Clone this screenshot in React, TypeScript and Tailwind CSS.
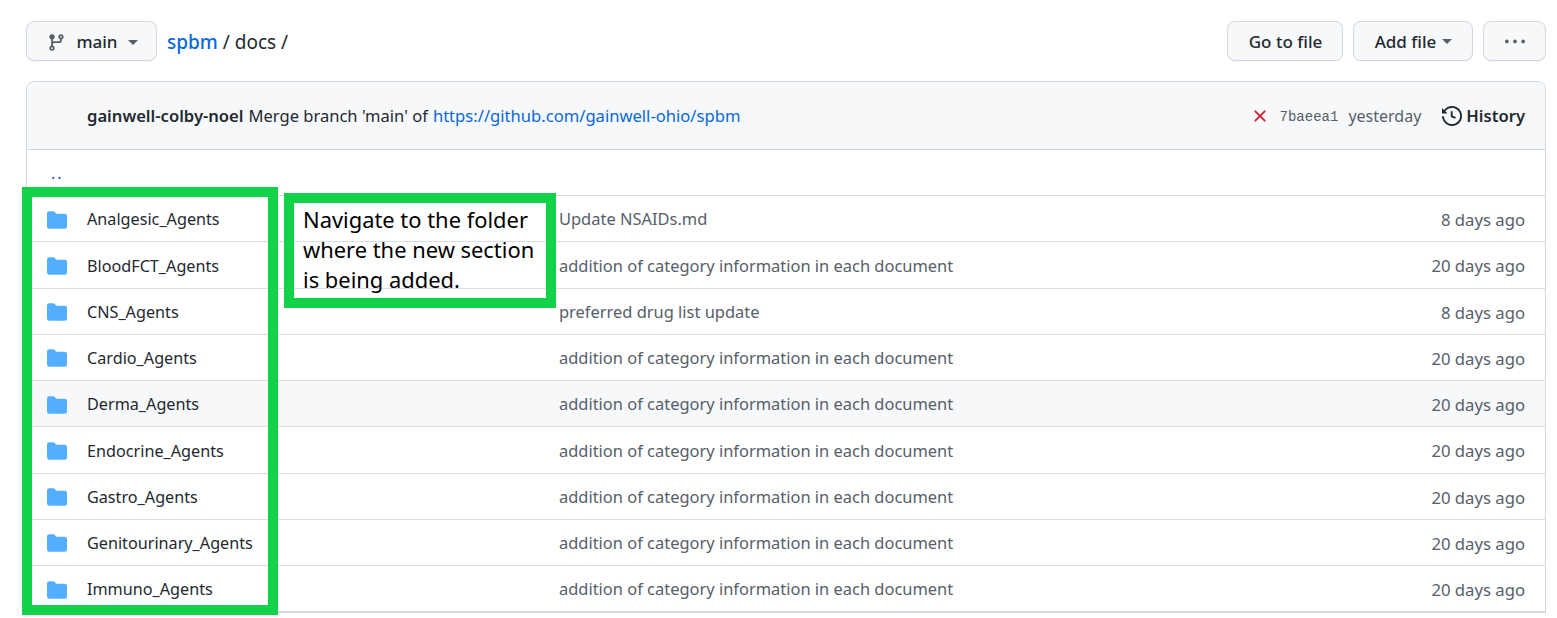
const FONT = "font-['Noto_Sans',sans-serif]";

const rows = [
  { name: "Analgesic_Agents", msg: "Update NSAIDs.md", age: "8 days ago" },
  { name: "BloodFCT_Agents", msg: "addition of category information in each document", age: "20 days ago" },
  { name: "CNS_Agents", msg: "preferred drug list update", age: "8 days ago" },
  { name: "Cardio_Agents", msg: "addition of category information in each document", age: "20 days ago" },
  { name: "Derma_Agents", msg: "addition of category information in each document", age: "20 days ago", hover: true },
  { name: "Endocrine_Agents", msg: "addition of category information in each document", age: "20 days ago" },
  { name: "Gastro_Agents", msg: "addition of category information in each document", age: "20 days ago" },
  { name: "Genitourinary_Agents", msg: "addition of category information in each document", age: "20 days ago" },
  { name: "Immuno_Agents", msg: "addition of category information in each document", age: "20 days ago" },
];

function Caret() {
  return <span className="inline-block border-x-[5px] border-t-[5px] border-x-transparent border-t-[#57606a]" />;
}

function FolderIcon() {
  return (
    <svg viewBox="0 0 16 16" className="w-5 h-5 fill-[#54aeff] shrink-0">
      <path d="M1.75 1A1.75 1.75 0 000 2.75v10.5C0 14.216.784 15 1.75 15h12.5A1.75 1.75 0 0016 13.25v-8.5A1.75 1.75 0 0014.25 3H7.5a.25.25 0 01-.2-.1l-.9-1.2C6.07 1.26 5.55 1 5 1H1.75z" />
    </svg>
  );
}

function Button({ className, children }: { className: string; children: React.ReactNode }) {
  return (
    <div className={`h-10 pt-[2px] flex items-center justify-center rounded-lg border border-[#d0d7de] bg-[#f6f8fa] text-[17px] font-medium text-[#24292f] shadow-[0_1px_0_rgba(27,31,36,0.04)] ${className}`}>
      {children}
    </div>
  );
}

export default function App() {
  return (
    <div className={`relative w-[1557px] h-[618px] overflow-hidden bg-white pl-[26px] pr-[11px] pt-[21px] ${FONT}`}>
      {/* Top bar */}
      <div className="flex items-center h-10">
        <Button className="w-[131px] gap-[10px] pl-[2px]">
          <svg viewBox="0 0 16 16" className="w-[19px] h-[19px] fill-[#57606a]">
            <path d="M11.75 2.5a.75.75 0 100 1.5.75.75 0 000-1.5zm-2.25.75a2.25 2.25 0 113 2.122V6A2.5 2.5 0 0110 8.5H6a1 1 0 00-1 1v1.128a2.251 2.251 0 11-1.5 0V5.372a2.25 2.25 0 111.5 0v1.836A2.492 2.492 0 016 7h4a1 1 0 001-1v-.628A2.25 2.25 0 019.5 3.25zM4.25 12a.75.75 0 100 1.5.75.75 0 000-1.5zM3.5 3.25a.75.75 0 111.5 0 .75.75 0 01-1.5 0z" />
          </svg>
          <span>main</span>
          <Caret />
        </Button>
        <div className="ml-[10px] pt-[3px] text-[19px] text-[#24292f]">
          <span className="font-medium text-[#0969da]">spbm</span> / docs /
        </div>
        <div className="ml-auto flex gap-[10px]">
          <Button className="w-[116px] pl-[1px]">Go to file</Button>
          <Button className="w-[120px] gap-[6px] pl-[1px]">
            <span>Add file</span>
            <span className="mb-[8px]"><Caret /></span>
          </Button>
          <Button className="w-[63px]">
            <svg viewBox="0 0 16 16" className="w-[20px] h-[20px] fill-[#57606a]">
              <path d="M8 9a1.5 1.5 0 100-3 1.5 1.5 0 000 3zM1.5 9a1.5 1.5 0 100-3 1.5 1.5 0 000 3zm13 0a1.5 1.5 0 100-3 1.5 1.5 0 000 3z" />
            </svg>
          </Button>
        </div>
      </div>

      {/* File table */}
      <div className="mt-5 rounded-t-lg border border-[#d0d7de] text-[16px]">
        <div className="h-[68px] pt-[1px] flex items-center rounded-t-lg bg-[#f6f8fa] border-b border-[#d0d7de] pl-[60px] pr-5">
          <span className="text-[16.6px] font-semibold text-[#24292f]">gainwell-colby-noel</span>
          <span className="ml-[5px] text-[16.55px] text-[#24292f]">Merge branch 'main' of</span>
          <span className="ml-[5px] text-[16.6px] text-[#0969da]">https://github.com/gainwell-ohio/spbm</span>
          <svg viewBox="0 0 16 16" className="ml-auto w-[20px] h-[20px] fill-[#cf222e]">
            <path d="M3.72 3.72a.75.75 0 011.06 0L8 6.94l3.22-3.22a.75.75 0 111.06 1.06L9.06 8l3.22 3.22a.75.75 0 11-1.06 1.06L8 9.06l-3.22 3.22a.75.75 0 01-1.06-1.06L6.94 8 3.72 4.78a.75.75 0 010-1.06z" />
          </svg>
          <span className="ml-[10px] mt-[2px] font-['Liberation_Mono',monospace] text-[14px] text-[#57606a]">7baeea1</span>
          <span className="ml-[10px] text-[#57606a]">yesterday</span>
          <svg viewBox="0 0 16 16" className="ml-[21px] w-5 h-5 fill-[#24292f]">
            <path d="M1.643 3.143L.427 1.927A.25.25 0 000 2.104V5.75c0 .138.112.25.25.25h3.646a.25.25 0 00.177-.427L2.715 4.215a6.5 6.5 0 11-1.18 4.458.75.75 0 10-1.493.154 8.001 8.001 0 101.6-5.684zM7.75 4a.75.75 0 01.75.75v2.992l2.028.812a.75.75 0 01-.557 1.392l-2.5-1A.75.75 0 017 8.25v-3.5A.75.75 0 017.75 4z" />
          </svg>
          <span className="ml-[4px] text-[16.6px] font-semibold text-[#24292f]">History</span>
        </div>
        <div className="h-[46px] border-b border-[#d8dee4] pl-[24px] pt-[11px] tracking-[2px] text-[#0969da]">..</div>
        {rows.map((r) => (
          <div key={r.name} className={`h-[46.25px] pt-[2px] flex items-center border-b border-[#d8dee4] pl-[20px] pr-5 ${r.hover ? "bg-[#f6f8fa]" : ""}`}>
            <FolderIcon />
            <span className="ml-5 w-[472px] text-[16.2px] text-[#24292f]">{r.name}</span>
            <span className="text-[16.46px] text-[#57606a]">{r.msg}</span>
            <span className="ml-auto text-[16.7px] text-[#57606a]">{r.age}</span>
          </div>
        ))}
      </div>

      {/* Green annotation boxes */}
      <div className="absolute left-[22px] top-[187px] w-[256px] h-[428px] border-[10px] border-[#11d248]" />
      <div className="absolute left-[284px] top-[193px] w-[272px] h-[115px] border-[10px] border-[#11d248] pl-[9px] pt-[2px] text-[21.9px] leading-[30px] text-black whitespace-nowrap">
        Navigate to the folder
        <br />
        where the new section
        <br />
        is being added.
      </div>
    </div>
  );
}
